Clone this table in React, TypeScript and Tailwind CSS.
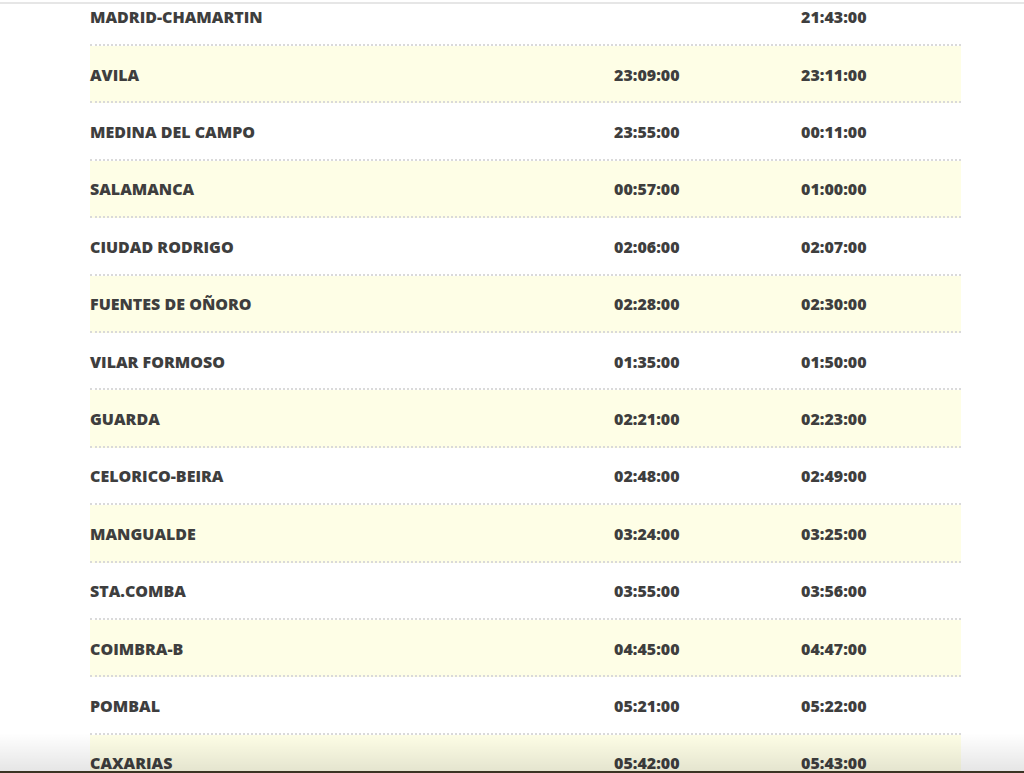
import React from "react";

type Stop = {
  station: string;
  arrival: string;
  departure: string;
};

const stops: Stop[] = [
  { station: "MADRID-CHAMARTIN", arrival: "", departure: "21:43:00" },
  { station: "AVILA", arrival: "23:09:00", departure: "23:11:00" },
  { station: "MEDINA DEL CAMPO", arrival: "23:55:00", departure: "00:11:00" },
  { station: "SALAMANCA", arrival: "00:57:00", departure: "01:00:00" },
  { station: "CIUDAD RODRIGO", arrival: "02:06:00", departure: "02:07:00" },
  { station: "FUENTES DE OÑORO", arrival: "02:28:00", departure: "02:30:00" },
  { station: "VILAR FORMOSO", arrival: "01:35:00", departure: "01:50:00" },
  { station: "GUARDA", arrival: "02:21:00", departure: "02:23:00" },
  { station: "CELORICO-BEIRA", arrival: "02:48:00", departure: "02:49:00" },
  { station: "MANGUALDE", arrival: "03:24:00", departure: "03:25:00" },
  { station: "STA.COMBA", arrival: "03:55:00", departure: "03:56:00" },
  { station: "COIMBRA-B", arrival: "04:45:00", departure: "04:47:00" },
  { station: "POMBAL", arrival: "05:21:00", departure: "05:22:00" },
  { station: "CAXARIAS", arrival: "05:42:00", departure: "05:43:00" },
];

export default function App() {
  return (
    <div className="relative h-[773px] w-full overflow-hidden bg-white font-['Open_Sans',sans-serif]">
      {/* timetable, scrolled a little past the header */}
      <div className="ml-[89px] mt-[-11.4px] w-[872px] pl-px">
        {stops.map((s, i) => (
          <div
            key={s.station}
            className={`grid h-[57.4px] grid-cols-[524px_187px_1fr] items-center border-b-2 border-dotted border-[#dadada] pt-[2px] text-[16px] font-extrabold text-[#3e3e3e] ${
              i % 2 === 1 ? "bg-[#fefee6]" : "bg-white"
            }`}
          >
            <span>{s.station}</span>
            <span>{s.arrival}</span>
            <span>{s.departure}</span>
          </div>
        ))}
      </div>

      {/* browser chrome edges */}
      <div className="absolute inset-x-0 top-[2px] h-[2px] bg-[#e6e6e6]" />
      <div className="pointer-events-none absolute inset-x-0 bottom-[2px] h-[38px] bg-gradient-to-b from-transparent to-black/10" />
      <div className="absolute inset-x-0 bottom-0 h-[2px] bg-[#3b3424]" />
    </div>
  );
}
